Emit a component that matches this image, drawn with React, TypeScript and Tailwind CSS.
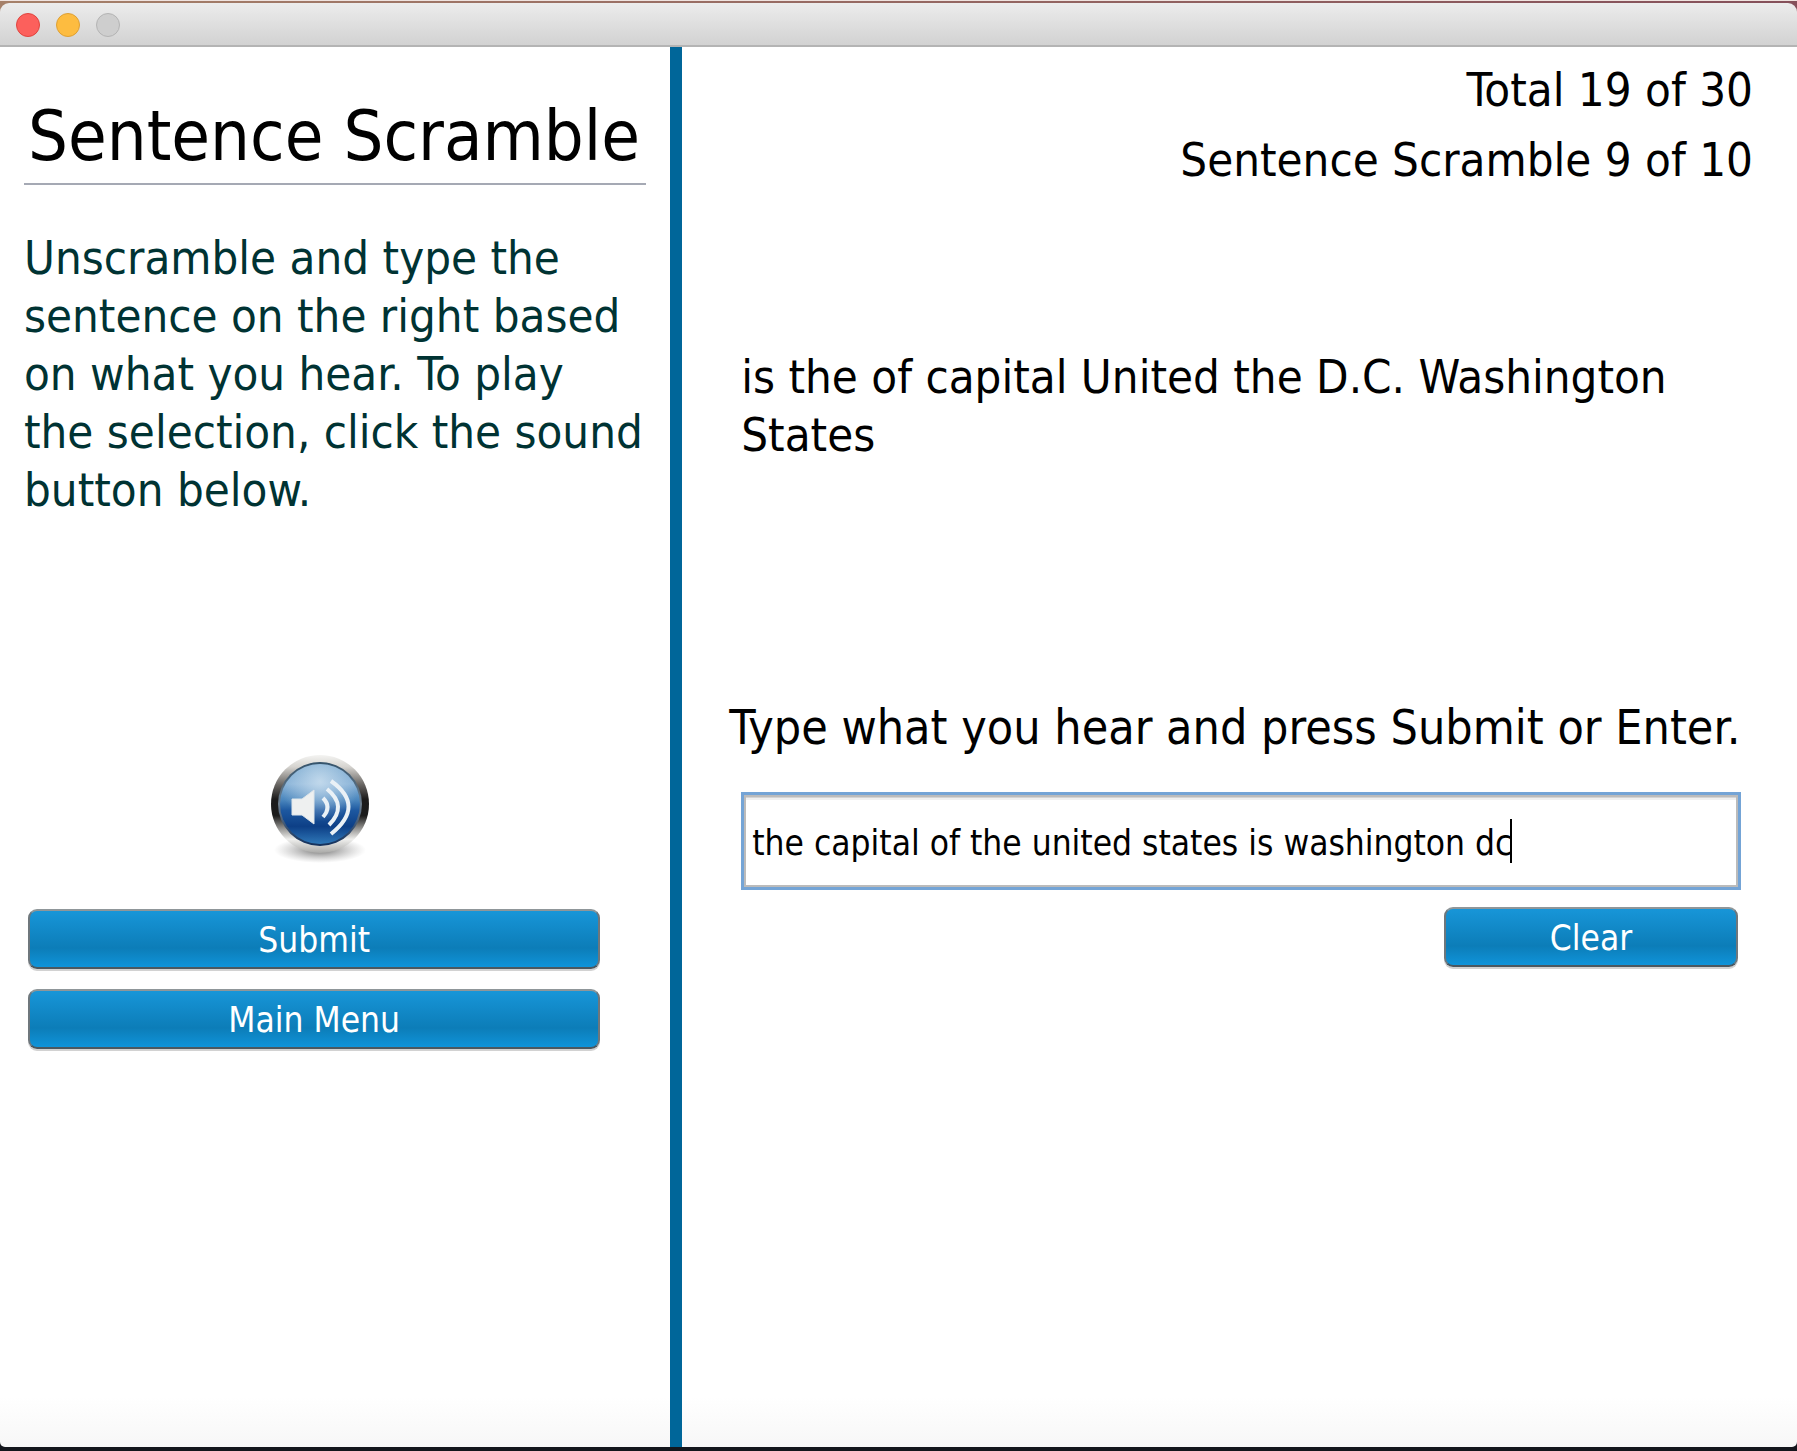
import React, { useLayoutEffect, useRef, useState } from 'react';

const buttonClass =
  'h-[60px] rounded-[9px] border-2 border-t-[#8f9699] border-x-[#6f777c] border-b-[#4b5860] bg-linear-to-b from-[#1897da] via-[#0c7db8] via-65% to-[#1096dd] bg-origin-border pt-0.5 text-[35px] leading-[54px] text-white shadow-[0_2px_0_#d2d2d2]';

function SpeakerIcon() {
  return (
    <svg viewBox="0 0 112 116" className="h-[116px] w-28" aria-hidden="true">
      <defs>
        <linearGradient id="ring" x1="0" y1="0" x2="0" y2="1">
          <stop offset="0" stopColor="#f4f4f2" />
          <stop offset="0.12" stopColor="#d6d4d0" />
          <stop offset="0.3" stopColor="#6a6764" />
          <stop offset="0.45" stopColor="#1c1b1b" />
          <stop offset="0.62" stopColor="#1c1c1c" />
          <stop offset="0.74" stopColor="#8d8c8a" />
          <stop offset="0.86" stopColor="#efefed" />
          <stop offset="1" stopColor="#a9a9a7" />
        </linearGradient>
        <linearGradient id="ringInner" x1="0" y1="0" x2="0" y2="1">
          <stop offset="0" stopColor="#34536b" />
          <stop offset="0.5" stopColor="#6d7f90" />
          <stop offset="1" stopColor="#12305c" />
        </linearGradient>
        <linearGradient id="face" x1="0" y1="0" x2="0" y2="1">
          <stop offset="0" stopColor="#6fa2cb" />
          <stop offset="0.25" stopColor="#85b0d6" />
          <stop offset="0.45" stopColor="#4a86bd" />
          <stop offset="0.58" stopColor="#1d58a0" />
          <stop offset="0.78" stopColor="#0d3f86" />
          <stop offset="1" stopColor="#2f78b8" />
        </linearGradient>
        <radialGradient id="glow" cx="0.5" cy="0.22" r="0.5">
          <stop offset="0" stopColor="#d5e6f3" stopOpacity="0.75" />
          <stop offset="1" stopColor="#d5e6f3" stopOpacity="0" />
        </radialGradient>
        <radialGradient id="shadow">
          <stop offset="0" stopColor="#555" stopOpacity="0.85" />
          <stop offset="1" stopColor="#999" stopOpacity="0" />
        </radialGradient>
      </defs>
      <ellipse cx="56" cy="99" rx="46" ry="13" fill="url(#shadow)" />
      <circle cx="56" cy="53" r="49" fill="url(#ring)" />
      <circle cx="56" cy="53" r="42" fill="url(#ringInner)" />
      <circle cx="56" cy="53" r="40" fill="url(#face)" />
      <circle cx="56" cy="53" r="40" fill="url(#glow)" />
      <path d="M28 48h10l12-9v34l-12-9H28z" fill="#eef0f0" stroke="#dfe6ea" strokeWidth="1" strokeLinejoin="round" />
      <g fill="none" stroke="#eaf1f6" strokeWidth="4">
        <path d="M59 47q9 9 0 19" />
        <path d="M63 38q21 17 2 36" />
        <path d="M67 30q35 25 0 53" />
      </g>
    </svg>
  );
}

function AnswerField({ value, onChange }: { value: string; onChange: (v: string) => void }) {
  const input = useRef<HTMLInputElement>(null);
  const [caret, setCaret] = useState(0);

  useLayoutEffect(() => {
    const ctx = document.createElement('canvas').getContext('2d');
    if (!ctx || !input.current) return;
    const style = getComputedStyle(input.current);
    ctx.font = `${style.fontSize} ${style.fontFamily}`;
    setCaret(Math.round(ctx.measureText(value).width) + 9);
  }, [value]);

  return (
    <div className="relative mt-9 mr-14 ml-[59px]">
      <input
        id="answer"
        ref={input}
        value={value}
        onChange={(e) => onChange(e.target.value)}
        className="h-[98px] w-full border-[3px] border-[#74a4d6] bg-white px-2 pt-1 text-[35px] text-black caret-transparent shadow-[inset_0_0_0_2px_#bbbbbb,inset_0_2px_0_#9f9f9f,inset_0_3px_0_#d4d4d4,inset_0_5px_0_#f0f0f0] outline-none"
      />
      <span className="absolute top-[27px] h-11 w-0.5 bg-black" style={{ left: caret }} />
    </div>
  );
}

export default function App() {
  const [answer, setAnswer] = useState('the capital of the united states is washington dc');

  return (
    <div className="flex min-h-screen flex-col bg-[#13161c] pb-1 font-['DejaVu_Sans_Condensed','DejaVu_Sans',sans-serif] text-black">
      <header className="border-t border-[#efe3df] bg-linear-to-r from-[#a58069] to-[#85505a] pt-0.5">
        <div className="flex h-11 items-center gap-4 rounded-t-[9px] border-b-2 border-[#b4b4b4] bg-linear-to-b from-[#ececec] to-[#d2d2d2] px-4 pt-0.5">
          <button aria-label="Close" className="size-6 rounded-full border border-[#e0443e] bg-[#fc605c]" />
          <button aria-label="Minimize" className="size-6 rounded-full border border-[#dea034] bg-[#fdbc40]" />
          <button aria-label="Zoom" className="size-6 rounded-full border border-[#b4b4b4] bg-[#cecece]" />
        </div>
      </header>

      <main className="grid flex-1 grid-cols-[37.3%_12px_1fr] rounded-b-[5px] bg-linear-to-t from-[#f7f7f7] to-white to-[50px]">
        <section className="px-6 pt-[47px]">
          <h1 className="border-b-2 border-[#a5a9b4] pb-[5px] pl-1 text-[70px] leading-[84px] whitespace-nowrap">
            Sentence Scramble
          </h1>
          <p className="mt-11 text-[47px] leading-[58px] text-[#003333]">
            Unscramble and type the sentence on the right based on what you hear. To play the selection, click the sound
            button below.
          </p>
          <div className="mt-[232px] mr-[46px] ml-1 flex flex-col">
            <button aria-label="Play sound" className="ml-3 self-center">
              <SpeakerIcon />
            </button>
            <button className={`mt-[42px] ${buttonClass}`}>Submit</button>
            <button className={`mt-5 ${buttonClass}`}>Main Menu</button>
          </div>
        </section>

        <div className="bg-[#006699]" />

        <section className="pt-2">
          <div className="pr-11 text-right text-[47px] leading-[70px]">
            <p>Total 19 of 30</p>
            <p>Sentence Scramble 9 of 10</p>
          </div>
          <p className="mt-[153px] pr-14 pl-[59px] text-[47px] leading-[58px]">
            is the of capital United the D.C. Washington States
          </p>
          <label htmlFor="answer" className="mt-[234px] block pl-[47px] text-[48px] leading-[58px] whitespace-nowrap">
            Type what you hear and press Submit or Enter.
          </label>
          <AnswerField value={answer} onChange={setAnswer} />
          <div className="mt-[17px] mr-[59px] flex justify-end">
            <button onClick={() => setAnswer('')} className={`w-[294px] ${buttonClass}`}>
              Clear
            </button>
          </div>
        </section>
      </main>
    </div>
  );
}
